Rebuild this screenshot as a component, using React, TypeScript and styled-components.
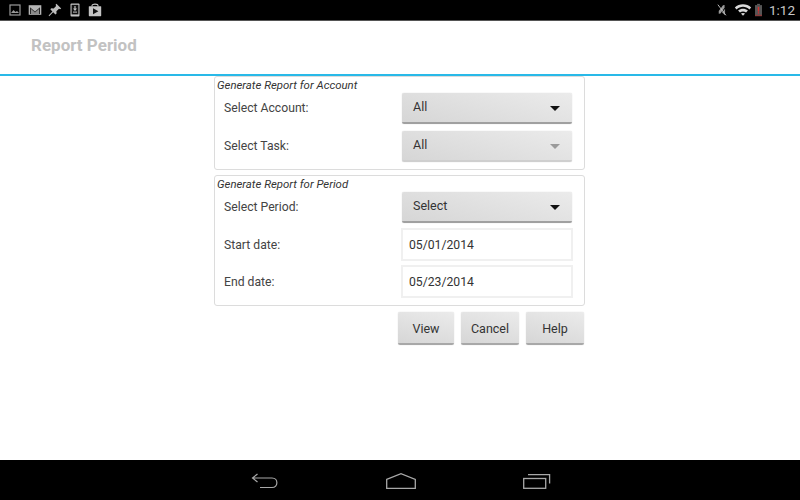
import styled, { createGlobalStyle } from "styled-components";

const GlobalStyle = createGlobalStyle`
  html, body {
    margin: 0;
    padding: 0;
    background: #fff;
    font-family: Roboto, "Liberation Sans", sans-serif;
  }
`;

function Dropdown({ value, disabled }: { value: string; disabled?: boolean }) {
  return (
    <SelectBox $disabled={disabled}>
      <span>{value}</span>
      <Caret $disabled={disabled} />
    </SelectBox>
  );
}

function App() {
  return (
    <Screen>
      <GlobalStyle />
      <StatusBar>
        <StatusIcons>
          {/* picture */}
          <svg width="12" height="12" viewBox="0 0 12 12">
            <rect x="1" y="1" width="10" height="10" fill="none" stroke="#9a9a9a" strokeWidth="1.2" />
            <path d="M2 9 L4.5 6 L6.5 8 L8 7 L10 9 Z" fill="#9a9a9a" />
          </svg>
          {/* mail */}
          <svg width="14" height="12" viewBox="0 0 14 12">
            <rect x="0.7" y="1.2" width="12.6" height="9.6" fill="#b5b5b5" />
            <path d="M2 3.2 L7 7.4 L12 3.2 L12 10 L2 10 Z" fill="#2b2b2b" />
            <path d="M3 10 L3 5 L7 8.6 L11 5 L11 10 Z" fill="#8c8c8c" />
          </svg>
          {/* pin */}
          <PinIcon width="14" height="14" viewBox="0 0 14 14">
            <path
              d="M8.4 0.8 L13.2 5.4 L12.1 6.3 L11 5.8 L8.4 8.2 L8.6 10.6 L7.4 11.6 L5.2 9.3 L1.2 13.2 L0.6 12.6 L4.4 8.5 L2.3 6.3 L3.4 5.2 L5.7 5.5 L8.1 2.9 L7.6 1.7 Z"
              fill="#bdbdbd"
            />
          </PinIcon>
          {/* phone download */}
          <PhoneIcon width="10" height="14" viewBox="0 0 10 14">
            <rect x="0.5" y="0.5" width="9" height="13" rx="1" fill="#c4c4c4" />
            <rect x="1.6" y="1.8" width="6.8" height="9.6" fill="#111" />
            <path d="M4.4 3 H5.6 V5.6 H7 L5 8 L3 5.6 H4.4 Z" fill="#c4c4c4" />
            <rect x="3" y="8.6" width="4" height="1" fill="#c4c4c4" />
          </PhoneIcon>
          {/* play store bag */}
          <BagIcon width="14" height="14" viewBox="0 0 14 14">
            <path d="M4 3.5 V2.6 C4 0.6 10 0.6 10 2.6 V3.5" fill="none" stroke="#c4c4c4" strokeWidth="1.1" />
            <rect x="0.8" y="3.2" width="12.4" height="10" rx="0.6" fill="#c4c4c4" />
            <path d="M5 5.2 L10.4 8.2 L5 11.2 Z" fill="#111" />
          </BagIcon>
        </StatusIcons>
        <StatusRight>
          {/* muted vibrate */}
          <svg width="12" height="14" viewBox="0 0 14 14">
            <path d="M3.2 11.5 L3.2 8.2 L8.2 1.6 L10 1.2 L10 4.4 L5.2 11.2 Z" fill="#9a9a9a" />
            <path d="M10.6 5.4 L10.6 13 L7 9.8 Z" fill="#8a8a8a" />
            <path d="M2.2 0.8 L11.6 13.2" stroke="#c0c0c0" strokeWidth="1.1" />
          </svg>
          {/* wifi */}
          <WifiIcon width="18" height="12" viewBox="0 0 15 11">
            <path d="M0 3.2 C4 -0.8 11 -0.8 15 3.2 L13.4 5 C10 1.8 5 1.8 1.6 5 Z" fill="#d8d8d8" />
            <path d="M3 6 C5.6 3.8 9.4 3.8 12 6 L10.3 7.8 C8.6 6.5 6.4 6.5 4.7 7.8 Z" fill="#d8d8d8" />
            <path d="M5.6 8.7 C6.7 8 8.3 8 9.4 8.7 L7.5 10.8 Z" fill="#d8d8d8" />
          </WifiIcon>
          {/* low battery */}
          <BatteryIcon width="7" height="14" viewBox="0 0 8 14">
            <rect x="2.4" y="0" width="3.2" height="1.4" fill="#5c5c5c" />
            <rect x="0" y="1.4" width="8" height="12.6" fill="#555" />
            <rect x="0" y="12.4" width="8" height="1.6" fill="#8a3a3a" />
            <rect x="3.2" y="3.4" width="1.6" height="5.4" fill="#d32f2f" />
            <rect x="3.2" y="9.6" width="1.6" height="1.5" fill="#d32f2f" />
          </BatteryIcon>
          <Clock>1:12</Clock>
        </StatusRight>
      </StatusBar>

      <Header>
        <HeaderTitle>Report Period</HeaderTitle>
      </Header>

      <Content>
        <Group $height={94}>
          <GroupTitle>Generate Report for Account</GroupTitle>
          <Row>
            <Label>Select Account:</Label>
            <Dropdown value="All" />
          </Row>
          <Row>
            <Label>Select Task:</Label>
            <Dropdown value="All" disabled />
          </Row>
        </Group>

        <Group $height={131}>
          <GroupTitle>Generate Report for Period</GroupTitle>
          <Row>
            <Label>Select Period:</Label>
            <Dropdown value="Select" />
          </Row>
          <InputRow>
            <Label>Start date:</Label>
            <DateField>05/01/2014</DateField>
          </InputRow>
          <InputRow>
            <Label>End date:</Label>
            <DateField>05/23/2014</DateField>
          </InputRow>
        </Group>

        <Actions>
          <ActionButton $width={56}>View</ActionButton>
          <ActionButton $width={58}>Cancel</ActionButton>
          <ActionButton $width={58}>Help</ActionButton>
        </Actions>
      </Content>

      <NavBar>
        <svg width="28" height="16" viewBox="0 0 28 16">
          <path
            d="M6.5 1 L1.5 5 L6.5 9 M1.5 5 H21 C27.5 5 27.5 14.5 21 14.5 H9"
            fill="none"
            stroke="#a8a8a8"
            strokeWidth="1.2"
          />
        </svg>
        <svg width="30" height="16" viewBox="0 0 30 16">
          <path d="M0.7 6.4 L15 0.7 L29.3 6.4 V15.3 H0.7 Z" fill="none" stroke="#a8a8a8" strokeWidth="1.3" />
        </svg>
        <svg width="28" height="16" viewBox="0 0 28 16">
          <rect x="0.7" y="5.5" width="22" height="9.8" fill="none" stroke="#a8a8a8" strokeWidth="1.3" />
          <path d="M5 1.6 H26.6 V10.5" fill="none" stroke="#a8a8a8" strokeWidth="1.3" />
        </svg>
      </NavBar>
    </Screen>
  );
}

const Screen = styled.div`
  width: 800px;
  height: 500px;
  display: flex;
  flex-direction: column;
  overflow: hidden;
  background: #fff;
`;

const StatusBar = styled.div`
  height: 20px;
  flex: none;
  display: flex;
  align-items: center;
  justify-content: space-between;
  padding: 0 5px 0 9px;
  background: #000;
  border-bottom: 1px solid #555;
`;

const StatusIcons = styled.div`
  display: flex;
  align-items: center;
  gap: 7px;
`;

const PinIcon = styled.svg`
  margin-left: -1px;
`;

const PhoneIcon = styled.svg`
  margin-left: 1px;
`;

const BagIcon = styled.svg`
  margin-left: 1px;
`;

const StatusRight = styled.div`
  display: flex;
  align-items: center;
`;

const WifiIcon = styled.svg`
  margin-left: 6px;
`;

const BatteryIcon = styled.svg`
  margin-left: 3px;
`;

const Clock = styled.span`
  font-size: 13.5px;
  color: #c8c8c8;
  margin-left: 7px;
`;

const Header = styled.div`
  height: 53px;
  flex: none;
  display: flex;
  align-items: center;
  padding-left: 31px;
  border-bottom: 2px solid #29b9e8;
`;

const HeaderTitle = styled.div`
  font-size: 17px;
  font-weight: 700;
  color: #c2c2c2;
  margin-bottom: 5px;
`;

const Content = styled.div`
  flex: 1;
  display: flex;
  flex-direction: column;
  width: 371px;
  margin-left: 214px;
`;

const Group = styled.div<{ $height: number }>`
  box-sizing: border-box;
  height: ${(p) => p.$height}px;
  margin-bottom: 5px;
  border: 1px solid #dcdcdc;
  border-radius: 3px;
  display: flex;
  flex-direction: column;
`;

const GroupTitle = styled.div`
  font-size: 11.4px;
  font-style: italic;
  color: #333;
  height: 12px;
  line-height: 17px;
  padding-left: 2px;
`;

const Row = styled.div`
  display: flex;
  flex: none;
  align-items: center;
  justify-content: space-between;
  height: 38px;
  padding: 0 12px 0 9px;
`;

const InputRow = styled(Row)`
  height: 37px;
  padding-right: 11px;
`;

const Label = styled.div`
  font-size: 12.2px;
  color: #444;
`;

const SelectBox = styled.div<{ $disabled?: boolean }>`
  box-sizing: border-box;
  width: 170px;
  height: 31px;
  display: flex;
  align-items: center;
  justify-content: space-between;
  padding: 0 12px 1px 11px;
  font-size: 12.5px;
  color: #333;
  background: linear-gradient(195deg, #ebebeb, #d6d6d6);
  border-radius: 2px;
  border-bottom: 2px solid ${(p) => (p.$disabled ? "#cfcfcf" : "#a0a0a0")};
  box-shadow: 0 0 1px #bdbdbd;
`;

const Caret = styled.i<{ $disabled?: boolean }>`
  width: 0;
  height: 0;
  margin-top: 3px;
  border-left: 5.5px solid transparent;
  border-right: 5.5px solid transparent;
  border-top: 5px solid ${(p) => (p.$disabled ? "#9a9a9a" : "#111")};
`;

const DateField = styled.div`
  box-sizing: border-box;
  width: 172px;
  height: 33px;
  display: flex;
  align-items: center;
  padding-left: 6px;
  font-size: 12.2px;
  color: #333;
  background: #fff;
  border: 2px solid #f0f0f0;
`;

const Actions = styled.div`
  display: flex;
  justify-content: flex-end;
  gap: 7px;
  margin-top: 1px;
  padding-right: 1px;
`;

const ActionButton = styled.div<{ $width: number }>`
  box-sizing: border-box;
  width: ${(p) => p.$width}px;
  height: 33px;
  padding-top: 1px;
  display: flex;
  align-items: center;
  justify-content: center;
  font-size: 12.5px;
  color: #333;
  background: linear-gradient(195deg, #ebebeb, #d6d6d6);
  border-radius: 2px;
  border-bottom: 2px solid #a8a8a8;
  box-shadow: 0 0 1px #bdbdbd;
`;

const NavBar = styled.div`
  height: 40px;
  flex: none;
  display: flex;
  align-items: center;
  justify-content: center;
  gap: 107px;
  background: #000;
  padding: 2px 0 0 1px;
  box-sizing: border-box;
`;

export default App;
